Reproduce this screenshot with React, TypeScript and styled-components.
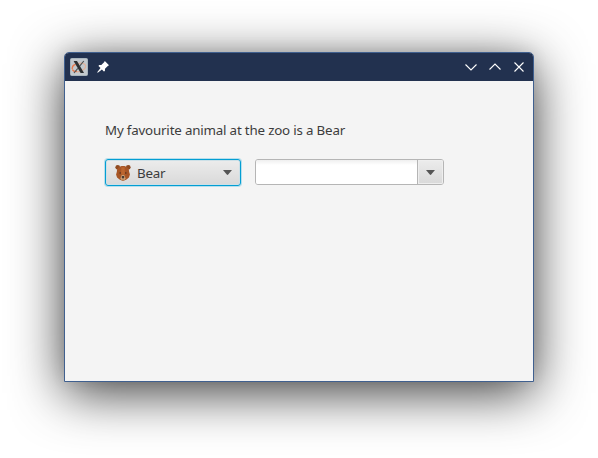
import React from "react";
import styled, { createGlobalStyle, css } from "styled-components";

const GlobalStyle = createGlobalStyle`
  * { box-sizing: border-box; }
  body {
    margin: 0;
    background: #fff;
    color: #3c3c3c;
    font: 13.333px/18px "Noto Sans", "Open Sans", sans-serif;
    letter-spacing: -0.18px;
    overflow: hidden;
  }
`;

const Desktop = styled.main`
  height: 458px;
  padding: 52px 64px 76px;
`;

const Window = styled.section`
  width: 470px;
  height: 330px;
  display: flex;
  flex-direction: column;
  border: 1px solid #40608f;
  border-radius: 5px 5px 0 0;
  background: #f4f4f4;
  box-shadow: 0 11px 52px rgba(0, 0, 0, 0.76), 0 -2px 16px rgba(0, 0, 0, 0.08);
`;

const TitleBar = styled.header`
  height: 28px;
  flex: none;
  display: flex;
  align-items: center;
  justify-content: space-between;
  padding: 0 6px 0 5px;
  background: #22314f;
  border-radius: 4px 4px 0 0;
`;

const TitleGroup = styled.div<{ $gap: number }>`
  display: flex;
  align-items: center;
  gap: ${({ $gap }) => $gap}px;
`;

const Icon = styled.svg`
  display: block;
  flex: none;
`;

const Content = styled.div`
  flex: 1;
  display: flex;
  flex-direction: column;
  gap: 19px;
  padding: 40px;
`;

const Message = styled.p`
  margin: 0;
  height: 19px;
  white-space: nowrap;
`;

const Controls = styled.div`
  display: flex;
  align-items: flex-start;
  gap: 14px;
`;

const raised = css`
  background: linear-gradient(#ececec, #d9d9d9);
`;

const ChoiceBox = styled.button`
  ${raised}
  width: 136px;
  height: 27px;
  display: flex;
  align-items: center;
  padding: 0 8px 0 9px;
  border: 1px solid #039ed3;
  border-radius: 3px;
  box-shadow: 0 0 0 1px rgba(3, 158, 211, 0.25), inset 0 0 0 1px #cde0e7;
  font: inherit;
  letter-spacing: inherit;
  color: inherit;
`;

const ChoiceLabel = styled.span`
  flex: 1;
  padding: 1px 0 0 6px;
  text-align: left;
`;

const ComboBox = styled.div`
  width: 189px;
  height: 26px;
  display: flex;
  overflow: hidden;
  border: 1px solid #b5b5b5;
  border-radius: 3px;
`;

const ComboInput = styled.input`
  flex: 1;
  min-width: 0;
  border: 0;
  outline: 0;
  padding: 0 7px;
  background: linear-gradient(#efefef, #fff 5px);
  font: inherit;
`;

const ComboArrow = styled.button`
  ${raised}
  width: 26px;
  display: flex;
  align-items: center;
  justify-content: center;
  padding: 0;
  border: 0;
  border-left: 1px solid #b5b5b5;
  box-shadow: inset 0 0 0 1px #eeeeee;
`;

const ChoiceIcon = styled(Icon)`
  margin-top: 1px;
`;

const AppIcon = () => (
  <Icon width="18" height="18" viewBox="0 0 18 18">
    <rect x="0.5" y="0.5" width="17" height="17" rx="1" fill="#c3c9ce" stroke="#a9b5bd" />
    <ellipse cx="9" cy="9.5" rx="6.8" ry="4" transform="rotate(-16 9 9.5)" fill="none" stroke="#e0b29b" strokeWidth="1.3" />
    <path d="M2.2 11C2 8.4 3.6 6.8 5.5 6.3M2.4 11.6c1 1.8 3 2 4.6 1.8" fill="none" stroke="#e5794f" strokeWidth="1.2" />
    <path d="M3.6 3H7L14 15H10.6Z" fill="#2d3032" />
    <path d="M13.8 3 9.6 8.2M7.8 10.4 4 15" stroke="#4d5153" strokeWidth="1.1" />
  </Icon>
);

const PinIcon = () => (
  <Icon width="14" height="14" viewBox="0 0 14 14">
    <path d="M8.8 1 13 5.2 11.8 6 9 8.8 8.9 11 7.9 11.5 5.9 9.5 1.8 12.8 1.2 12.2 4.5 8.1 2.5 6.1 3.1 5.1 5.3 5.1 8.1 2.3Z" fill="#fff" />
  </Icon>
);

const titleGlyphs = {
  minimize: "M2.5 5.5 8 11 13.5 5.5",
  maximize: "M2.5 10.5 8 5 13.5 10.5",
  close: "M3.5 3.5 12.5 12.5M12.5 3.5 3.5 12.5",
};

const WindowGlyph = ({ kind }: { kind: keyof typeof titleGlyphs }) => (
  <Icon width="16" height="16" viewBox="0 0 16 16">
    <path d={titleGlyphs[kind]} fill="none" stroke="#fff" strokeWidth="1.1" />
  </Icon>
);

const Arrow = () => (
  <Icon width="9" height="5" viewBox="0 0 9 5">
    <path d="M0 0H9L5.2 4.6Q4.5 5.2 3.8 4.6Z" fill="#555" />
  </Icon>
);

const BearIcon = () => (
  <ChoiceIcon width="16" height="16" viewBox="0.3 0.7 16.4 16.4">
    <circle cx="3.1" cy="3.1" r="2.4" fill="#8f4a20" />
    <circle cx="13.9" cy="3.1" r="2.4" fill="#8f4a20" />
    <path d="M8.5 1.8C12.5 1.8 14.6 4 14.8 7.5L15.6 10.5 14.6 13.5 11.7 15.7 8.5 17 5.3 15.7 2.4 13.5 1.4 10.5 2.2 7.5C2.4 4 4.5 1.8 8.5 1.8Z" fill="#a75525" />
    <path d="M6.8 3H10.2L10.5 10.5H6.5Z" fill="#bc662f" />
    <path d="M7 11.2Q8.5 10.2 10 11.2L11.2 14.8Q8.5 18.2 5.8 14.8Z" fill="#cda276" />
    <ellipse cx="8.5" cy="12.9" rx="1.4" ry="1" fill="#36302d" />
    <path d="M8.5 13.5V15.4" stroke="#4a352b" strokeWidth="0.7" />
    <circle cx="5.6" cy="8.8" r="0.75" fill="#412b20" />
    <circle cx="11.4" cy="8.8" r="0.75" fill="#412b20" />
  </ChoiceIcon>
);

export default function App() {
  return (
    <>
      <GlobalStyle />
      <Desktop>
        <Window>
          <TitleBar>
            <TitleGroup $gap={8}>
              <AppIcon />
              <PinIcon />
            </TitleGroup>
            <TitleGroup $gap={8}>
              <WindowGlyph kind="minimize" />
              <WindowGlyph kind="maximize" />
              <WindowGlyph kind="close" />
            </TitleGroup>
          </TitleBar>
          <Content>
            <Message>My favourite animal at the zoo is a Bear</Message>
            <Controls>
              <ChoiceBox type="button">
                <BearIcon />
                <ChoiceLabel>Bear</ChoiceLabel>
                <Arrow />
              </ChoiceBox>
              <ComboBox>
                <ComboInput aria-label="Animal" />
                <ComboArrow type="button" aria-label="Show options">
                  <Arrow />
                </ComboArrow>
              </ComboBox>
            </Controls>
          </Content>
        </Window>
      </Desktop>
    </>
  );
}
